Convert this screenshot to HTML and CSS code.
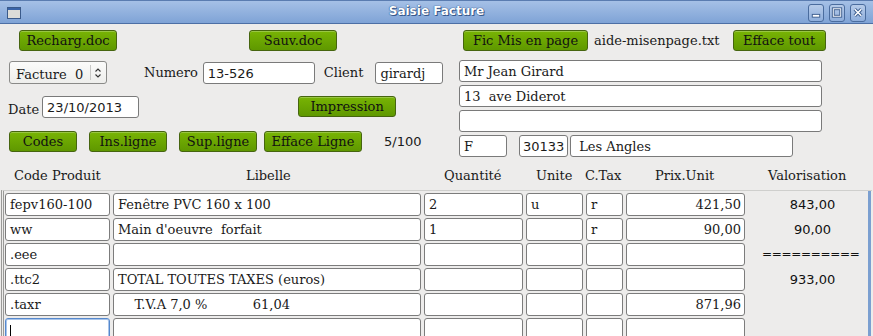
FILE: index.html
```html
<!DOCTYPE html>
<html>
<head>
<meta charset="utf-8">
<link rel="stylesheet" href="styles.css">
</head>
<body>
<div class="window">
  <div class="titlebar">
    <svg class="winicon" width="14" height="12" viewBox="0 0 14 12"><rect x="0.5" y="0.5" width="13" height="11" fill="#dcdcd8" stroke="#3a5a8a"/><rect x="1" y="1" width="12" height="2" fill="#3a64a8"/></svg>
    <div class="title">Saisie Facture</div>
    <div class="wbtns">
      <span class="wbtn"><svg width="15" height="17" viewBox="0 0 15 17"><rect x="3.5" y="10.5" width="8" height="3" fill="#fff" stroke="#3d5d8e"/></svg></span>
      <span class="wbtn"><svg width="15" height="17" viewBox="0 0 15 17"><rect x="3.5" y="4.5" width="8" height="8" fill="none" stroke="#3d5d8e" stroke-width="3"/><rect x="3.5" y="4.5" width="8" height="8" fill="none" stroke="#fff" stroke-width="1"/></svg></span>
      <span class="wbtn"><svg width="15" height="17" viewBox="0 0 15 17"><path d="M4 5 L11 12 M11 5 L4 12" stroke="#3d5d8e" stroke-width="3.6"/><path d="M4 5 L11 12 M11 5 L4 12" stroke="#fff" stroke-width="1.6"/></svg></span>
    </div>
  </div>
  <div class="content">
    <div class="row1">
      <button class="gbtn b-recharg">Recharg.doc</button>
      <button class="gbtn b-sauv">Sauv.doc</button>
      <button class="gbtn b-fic">Fic Mis en page</button>
      <span class="lbl aide">aide-misenpage.txt</span>
      <button class="gbtn b-efft">Efface tout</button>
    </div>
    <div class="mid">
      <div class="left">
        <div class="rowA">
          <div class="spin"><span class="spin-txt">Facture&nbsp;&nbsp;0</span><span class="spin-arr"><svg width="8" height="12" viewBox="0 0 8 12"><path d="M1.5 4.5 L4 2 L6.5 4.5 M1.5 7.5 L4 10 L6.5 7.5" fill="none" stroke="#333" stroke-width="1.1"/></svg></span></div>
          <span class="lbl l-num">Numero</span>
          <div class="inp sans i-num">13-526</div>
          <span class="lbl l-cli">Client</span>
          <div class="inp serif i-cli">girardj</div>
        </div>
        <div class="rowB">
          <span class="lbl">Date</span>
          <div class="inp sans i-date">23/10/2013</div>
          <button class="gbtn b-imp">Impression</button>
        </div>
        <div class="rowC">
          <button class="gbtn b-codes">Codes</button>
          <button class="gbtn b-ins">Ins.ligne</button>
          <button class="gbtn b-sup">Sup.ligne</button>
          <button class="gbtn b-effl">Efface Ligne</button>
          <span class="count">5/100</span>
        </div>
      </div>
      <div class="right">
        <div class="inp serif addr">Mr Jean Girard</div>
        <div class="inp serif addr">13&nbsp;&nbsp;ave Diderot</div>
        <div class="inp serif addr"></div>
        <div class="cityrow">
          <div class="inp serif i-f">F</div>
          <div class="inp sans i-cp">30133</div>
          <div class="inp serif i-city">&nbsp;Les Angles</div>
        </div>
      </div>
    </div>
    <div class="thead">
      <span class="h h-code">Code Produit</span>
      <span class="h h-lib">Libelle</span>
      <span class="h h-qte">Quantité</span>
      <span class="h h-un">Unite</span>
      <span class="h h-tax">C.Tax</span>
      <span class="h h-prix">Prix.Unit</span>
      <span class="h h-val">Valorisation</span>
    </div>
    <div class="table">
      <div class="trow">
        <div class="cell sans">fepv160-100</div>
        <div class="cell serif">Fenêtre PVC 160 x 100</div>
        <div class="cell serif">2</div>
        <div class="cell serif">u</div>
        <div class="cell serif">r</div>
        <div class="cell sans num">421,50</div>
        <div class="val">843,00</div>
      </div>
      <div class="trow">
        <div class="cell serif">ww</div>
        <div class="cell serif">Main d'oeuvre&nbsp;&nbsp;forfait</div>
        <div class="cell serif">1</div>
        <div class="cell serif"></div>
        <div class="cell serif">r</div>
        <div class="cell sans num">90,00</div>
        <div class="val">90,00</div>
      </div>
      <div class="trow">
        <div class="cell arial">.eee</div>
        <div class="cell"></div>
        <div class="cell"></div>
        <div class="cell"></div>
        <div class="cell"></div>
        <div class="cell"></div>
        <div class="val eq">==========</div>
      </div>
      <div class="trow">
        <div class="cell arial">.ttc2</div>
        <div class="cell arial">TOTAL TOUTES TAXES (euros)</div>
        <div class="cell"></div>
        <div class="cell"></div>
        <div class="cell"></div>
        <div class="cell"></div>
        <div class="val">933,00</div>
      </div>
      <div class="trow">
        <div class="cell arial">.taxr</div>
        <div class="cell arial">&nbsp;&nbsp;&nbsp;&nbsp;T.V.A 7,0 %&nbsp;&nbsp;&nbsp;&nbsp;&nbsp;&nbsp;&nbsp;&nbsp;&nbsp;&nbsp;&nbsp;61,04</div>
        <div class="cell"></div>
        <div class="cell"></div>
        <div class="cell"></div>
        <div class="cell sans num">871,96</div>
        <div class="val"></div>
      </div>
      <div class="trow">
        <div class="cell focus"><span class="caret"></span></div>
        <div class="cell"></div>
        <div class="cell"></div>
        <div class="cell"></div>
        <div class="cell"></div>
        <div class="cell"></div>
        <div class="val"></div>
      </div>
    </div>
  </div>
</div>
</body>
</html>
```
FILE: styles.css
```css
* { box-sizing: border-box; }
html, body { margin: 0; padding: 0; }
body {
  width: 873px;
  height: 336px;
  overflow: hidden;
  background: #edeceb;
  font-family: "DejaVu Serif", serif;
  font-size: 13px;
  color: #1a1a1a;
}
.window { width: 873px; height: 336px; position: relative; }
.titlebar {
  height: 24px;
  background: linear-gradient(#a5c0e6, #7fa3d6);
  border-top: 1px solid #5a7cb0;
  border-bottom: 1px solid #4d6fa5;
  display: flex;
  align-items: center;
  position: relative;
}
.winicon { margin-left: 7px; margin-top: 1px; }
.title {
  position: absolute;
  left: 0; right: 0; top: 3px;
  text-align: center;
  font-family: "DejaVu Sans", sans-serif;
  font-weight: bold;
  font-size: 12px;
  color: #fff;
  text-shadow: 0 0 1px #2b4a7c, 0 0 1px #2b4a7c, 1px 1px 0 #3a5c90;
}
.wbtns { margin-left: auto; display: flex; gap: 5px; margin-right: 7px; margin-top: 1px; }
.wbtn {
  width: 16px; height: 18px;
  border: 1px solid #4a6c9e;
  border-radius: 3px;
  background: linear-gradient(#b6cbe9, #8eaedc);
  display: flex; align-items: center; justify-content: center;
}
.wbtn svg { display: block; }
.content { padding: 0; }
.gbtn {
  font-family: "DejaVu Serif", serif;
  font-size: 13px;
  color: #111;
  height: 21px;
  padding: 0;
  border: 1px solid #46650f;
  border-radius: 3px;
  background: linear-gradient(#78b404, #5f9800);
  box-shadow: inset 0 1px 0 rgba(255,255,255,0.25);
  line-height: 18px;
}
.row1 { display: flex; align-items: center; height: 21px; margin-top: 6px; }
.b-recharg { margin-left: 19px; width: 98px; }
.b-sauv { margin-left: 132px; width: 88px; }
.b-fic { margin-left: 126px; width: 125px; }
.aide { margin-left: 6px; }
.b-efft { margin-left: 13px; width: 93px; }
.lbl { white-space: nowrap; }
.mid { display: flex; margin-top: 9px; }
.left { width: 459px; }
.rowA { display: flex; align-items: center; height: 23px; margin-top: 1px; }
.spin {
  margin-left: 9px;
  width: 98px; height: 23px;
  border: 1px solid #8a8a88;
  border-radius: 3px;
  background: linear-gradient(#fbfbfa, #eeeeec);
  display: flex; align-items: center;
}
.spin-txt { padding-left: 6px; width: 80px; margin-top: 3px; }
.spin-arr { border-left: 1px solid #c8c8c6; height: 15px; padding-left: 3px; display: flex; align-items: center; }
.l-num { margin-left: 37px; }
.inp {
  height: 22px;
  border: 1px solid #7a7a7a;
  border-radius: 3px;
  background: #fff;
  padding: 1px 4px 0;
  line-height: 19px;
  white-space: nowrap;
  overflow: hidden;
}
.sans { font-family: "DejaVu Sans", sans-serif; font-size: 13px; }
.serif { font-family: "DejaVu Serif", serif; font-size: 13px; }
.arial { font-family: "Liberation Sans", Arial, sans-serif; font-size: 14px; }
.i-num { margin-left: 5px; width: 112px; }
.l-cli { margin-left: 9px; }
.i-cli { margin-left: 12px; width: 68px; }
.rowB { display: flex; align-items: center; height: 23px; margin-top: 11px; }
.rowB .lbl { margin-left: 8px; margin-top: 5px; }
.i-date { margin-left: 3px; width: 97px; }
.b-imp { margin-left: 159px; width: 98px; align-self: flex-start; margin-top: 1px; }
.rowC { display: flex; align-items: center; height: 21px; margin-top: 13px; }
.b-codes { margin-left: 9px; width: 68px; }
.b-ins { margin-left: 12px; width: 78px; }
.b-sup { margin-left: 12px; width: 78px; }
.b-effl { margin-left: 7px; width: 98px; }
.count { margin-left: 22px; font-family: "DejaVu Sans", sans-serif; font-size: 13px; }
.right { display: flex; flex-direction: column; gap: 3px; }
.addr { width: 363px; }
.cityrow { display: flex; }
.i-f { width: 48px; }
.i-cp { width: 49px; margin-left: 12px; padding-left: 3px; }
.i-city { width: 223px; margin-left: 2px; }
.thead { position: relative; height: 28px; margin-top: 5px; }
.h { position: absolute; top: 6px; white-space: nowrap; }
.h-code { left: 14px; }
.h-lib { left: 246px; }
.h-qte { left: 444px; }
.h-un { left: 536px; }
.h-tax { left: 585px; width: 38px; overflow: hidden; }
.h-prix { left: 655px; }
.h-val { left: 768px; }
.table {
  margin-left: 1px;
  width: 871px;
  height: 152px;
  border-top: 1px solid #cfcfcd;
  border-left: 3px double #9a9a98;
  padding-top: 2px;
  padding-left: 1px;
  display: flex;
  flex-direction: column;
  gap: 2px;
  position: relative;
  overflow: hidden;
}
.table::after {
  content: "";
  position: absolute;
  top: 0; right: 1px;
  width: 3px; height: 100%;
  background: #7b9fd0;
}
.trow {
  display: grid;
  grid-template-columns: 105px 308px 99px 57px 37px 119px 120px;
  column-gap: 3px;
  height: 23px;
  flex: none;
}
.cell {
  height: 23px;
  border: 1px solid #7c7c7c;
  border-radius: 3px;
  background: #fff;
  padding: 1px 4px 0;
  line-height: 20px;
  white-space: nowrap;
  overflow: hidden;
  font-family: "DejaVu Serif", serif;
  font-size: 13px;
}
.cell.num { text-align: right; padding-right: 3px; }
.cell.focus { border-color: #5588cc; box-shadow: inset 0 0 0 1px #a9c4ea; }
.caret { display: inline-block; width: 1px; height: 14px; background: #000; margin-top: 5px; vertical-align: top; }
.val {
  font-family: "DejaVu Sans", sans-serif;
  font-size: 13px;
  line-height: 23px;
  text-align: center;
  padding-left: 9px;
  white-space: nowrap;
  overflow: hidden;
  color: #111;
}
.val.eq { text-align: left; padding-left: 14px; font-size: 12px; letter-spacing: -0.3px; }
```
